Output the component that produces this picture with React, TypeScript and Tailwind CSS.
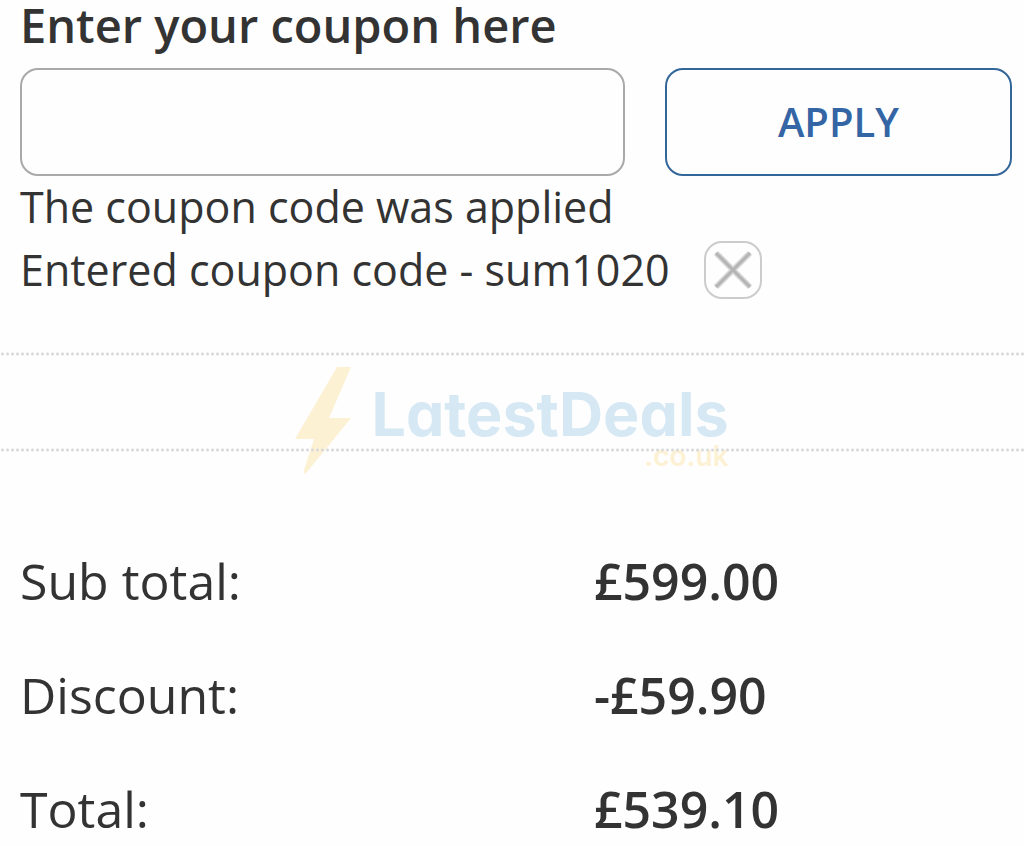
import { useState } from "react";

const totals = [
  { label: "Sub total:", value: "£599.00" },
  { label: "Discount:", value: "-£59.90" },
  { label: "Total:", value: "£539.10" },
];

function DottedLine() {
  return <hr className="relative h-1 border-0 bg-[radial-gradient(circle,#dadada_1px,transparent_2px)] bg-[length:5px_4px]" />;
}

function Watermark() {
  return (
    <div className="pointer-events-none absolute inset-x-0 top-3.5 flex justify-center gap-5">
      <svg className="h-[108px] w-14 shrink-0" viewBox="0 0 56 108" fill="#fdf1d4" aria-hidden="true">
        <path d="M42 1h14L34 52h22L12 106q-4 4-3-2L19 73H0z" />
      </svg>
      <div className="flex flex-col items-end font-['Inter',sans-serif] [font-feature-settings:'cv11']">
        <span className="mt-4 text-[61px] leading-[64px] font-bold text-[#d6e8f4]">LatestDeals</span>
        <span className="text-[28px] leading-5 font-semibold text-[#fdf1d4]">.co.uk</span>
      </div>
    </div>
  );
}

export default function App() {
  const [code, setCode] = useState("");
  const [applied, setApplied] = useState("sum1020");

  return (
    <main className="bg-[#fefefe] font-['Open_Sans',sans-serif] text-[#333333]">
      <form className="pl-5 pr-3" onSubmit={(e) => e.preventDefault()}>
        <label htmlFor="coupon" className="block text-[47px] leading-[50px] font-semibold">
          Enter your coupon here
        </label>
        <div className="mt-[18px] flex gap-10">
          <input
            id="coupon"
            type="text"
            className="h-[108px] min-w-0 flex-1 rounded-[18px] border-2 border-[#a9a9a9] px-6 text-[43px] outline-none"
            value={code}
            onChange={(e) => setCode(e.target.value)}
          />
          <button
            type="submit"
            className="h-[108px] w-[35%] rounded-[18px] border-2 border-[#336699] text-[40px] font-semibold text-[#3465a4]"
            onClick={() => code && setApplied(code)}
          >
            APPLY
          </button>
        </div>
        <p className="text-[43px] leading-[62px]">The coupon code was applied</p>
        <div className="flex items-center gap-[34px] text-[43px] leading-[64px]">
          <span>Entered coupon code - {applied}</span>
          <button
            type="button"
            aria-label="Remove coupon"
            className="flex size-[58px] items-center justify-center rounded-[18px] border-2 border-[#cccccc]"
            onClick={() => setApplied("")}
          >
            <svg className="size-10" viewBox="0 0 40 40" fill="none" aria-hidden="true">
              <path d="M3 3l34 34M37 3L3 37" stroke="#d8d8d8" strokeWidth="6" />
              <path d="M3 3l34 34M37 3L3 37" stroke="#b4b4b4" strokeWidth="3" />
            </svg>
          </button>
        </div>
      </form>

      <div className="relative mt-[50px]">
        <Watermark />
        <div className="flex flex-col gap-[92px]">
          <DottedLine />
          <DottedLine />
        </div>
      </div>

      <table className="mt-[72px] w-full text-[50px]">
        <tbody>
          {totals.map((row) => (
            <tr key={row.label} className="h-[114px]">
              <th scope="row" className="w-[58%] p-0 pl-5 text-left font-normal">{row.label}</th>
              <td className="p-0 font-semibold">{row.value}</td>
            </tr>
          ))}
        </tbody>
      </table>
    </main>
  );
}
